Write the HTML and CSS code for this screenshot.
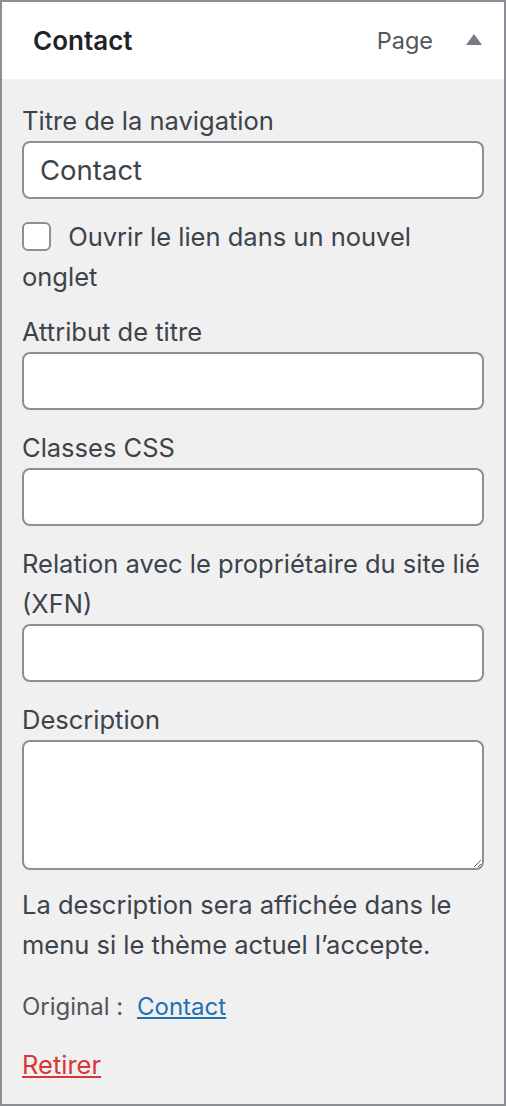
FILE: index.html
```html
<!DOCTYPE html>
<html lang="fr">
<head>
  <meta charset="UTF-8" />
  <meta name="viewport" content="width=device-width, initial-scale=1.0"/>
  <title>Contact</title>
  <link rel="stylesheet" href="styles.css">
</head>
<body>

  <div class="menu-item">
    <div class="item-bar">
      <span class="item-title">Contact</span>
      <span class="item-controls">
        <span class="item-type">Page</span>
        <span class="item-toggle"></span>
      </span>
    </div>

    <div class="item-settings">
      <p class="field">
        <label for="nav-label">Titre de la navigation</label>
        <input type="text" id="nav-label" class="widefat" value="Contact" />
      </p>

      <p class="field field-target">
        <label><input type="checkbox" class="check" /> Ouvrir le lien dans un nouvel onglet</label>
      </p>

      <p class="field">
        <label for="attr-title">Attribut de titre</label>
        <input type="text" id="attr-title" class="widefat" />
      </p>

      <p class="field">
        <label for="css-classes">Classes CSS</label>
        <input type="text" id="css-classes" class="widefat" />
      </p>

      <p class="field">
        <label for="xfn">Relation avec le propriétaire du site lié (XFN)</label>
        <input type="text" id="xfn" class="widefat" />
      </p>

      <p class="field field-description">
        <label for="desc">Description</label>
        <textarea id="desc" class="widefat"></textarea>
      </p>
      <p class="description">La description sera affichée dans le menu si le thème actuel l’accepte.</p>

      <p class="original">Original : <a href="#">Contact</a></p>

      <p class="actions"><a href="#" class="delete">Retirer</a></p>
    </div>
  </div>

</body>
</html>
```

FILE: styles.css
```css
* {
  box-sizing: border-box;
}

body {
  margin: 0;
  font-family: Inter, 'Liberation Sans', Arial, sans-serif;
  font-size: 25.5px;
  color: #3c434a;
  background: #fff;
}

.menu-item {
  width: 506px;
  height: 1106px;
  border: 2px solid #8c8f94;
  background: #f0f0f1;
}

.item-bar {
  height: 77px;
  background: #fff;
  display: flex;
  align-items: center;
  justify-content: space-between;
  padding: 0 22px 0 31px;
}

.item-title {
  font-weight: 600;
  color: #1d2327;
  font-size: 26px;
}

.item-controls {
  display: flex;
  align-items: center;
  gap: 33px;
}

.item-type {
  color: #50575e;
  font-size: 23.5px;
}

.item-toggle {
  width: 0;
  height: 0;
  border-left: 8px solid transparent;
  border-right: 8px solid transparent;
  border-bottom: 11px solid #787c82;
  margin-top: -2px;
}

.item-settings {
  padding: 22px 20px 0 20px;
}

.field {
  margin: 0 0 18px;
  line-height: 40px;
}

.field label {
  display: block;
}

.widefat {
  display: block;
  width: 100%;
  height: 58px;
  border: 2px solid #8c8f94;
  border-radius: 8px;
  background: #fff;
  font-family: inherit;
  font-size: 27.5px;
  color: #3c434a;
  padding: 0 16px;
  margin: 0;
}

textarea.widefat {
  height: 130px;
  padding: 8px 16px;
  vertical-align: top;
}

.field-target {
  margin-bottom: 15px;
}

.check {
  appearance: none;
  width: 29px;
  height: 29px;
  border: 2px solid #8c8f94;
  border-radius: 6px;
  background: #fff;
  margin: 0 10px 0 0;
  vertical-align: -5px;
}

.field-target label {
  display: inline;
}

.field-description {
  margin-bottom: 15px;
}

.description {
  margin: 0 0 22px;
  line-height: 40px;
}

.original {
  margin: 0 0 18px;
  line-height: 40px;
  color: #50575e;
  font-size: 24px;
}

.original a {
  color: #2271b1;
  margin-left: 7px;
}

.actions {
  margin: 0;
  line-height: 40px;
}

.delete {
  color: #d63638;
}
```
